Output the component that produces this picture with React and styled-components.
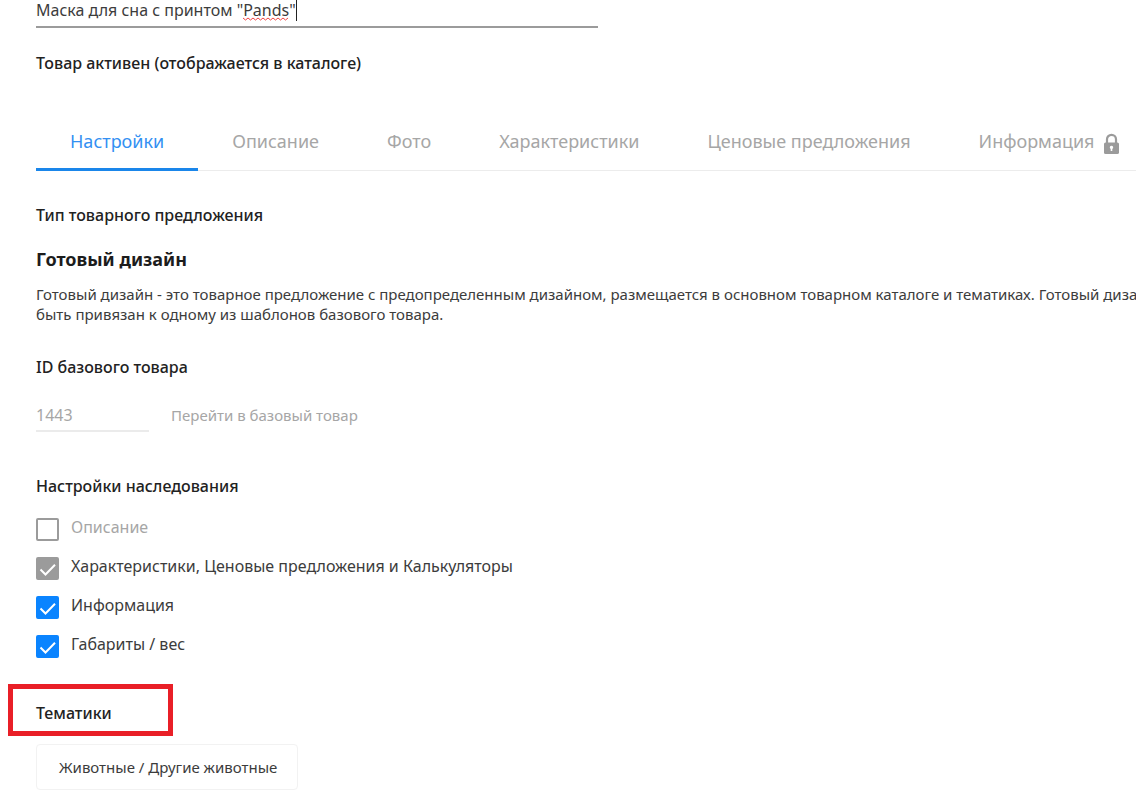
import React, { useState } from "react";
import styled, { createGlobalStyle } from "styled-components";

const GlobalStyle = createGlobalStyle`
  *, *::before, *::after { box-sizing: border-box; }
  body {
    margin: 0;
    background: #fff;
    color: #3c3c3c;
    font-family: "Noto Sans", "Open Sans", sans-serif;
    font-size: 16px;
    line-height: 24px;
  }
  h2, h3, p { margin: 0; }
  button, input { font: inherit; color: inherit; }
`;

const Page = styled.main`
  overflow: hidden;
  padding: 0 0 22px 36px;
`;

const NameField = styled.div`
  position: relative;
  max-width: 562px;
`;

const TextInput = styled.input`
  display: block;
  width: 100%;
  height: 28px;
  padding: 0 0 6px;
  border: 0;
  border-bottom: 2px solid #9b9b9b;
  border-radius: 0;
  outline: 0;
  background: none;
`;

const Squiggle = styled.svg`
  position: absolute;
  left: 207px;
  top: 17px;
`;

const Caret = styled.span`
  position: absolute;
  left: 260px;
  top: 0;
  width: 1px;
  height: 21px;
  background: #222;
`;

const Label = styled.h3`
  position: relative;
  color: #222;
  font-size: 16px;
  font-weight: 500;
  line-height: 24px;
`;

const Status = styled(Label)`
  margin: 23px 0 38px;
`;

const TabBar = styled.div`
  display: flex;
  width: max-content;
  min-width: 100%;
  border-bottom: 1px solid #ececec;
`;

const Tab = styled.button`
  display: flex;
  align-items: center;
  gap: 8px;
  height: 58px;
  margin-bottom: -1px;
  padding: 0 34px;
  border: 0;
  border-bottom: 3px solid ${(p) => (p.$active ? "#1a86ea" : "transparent")};
  background: none;
  color: ${(p) => (p.$active ? "#3390f2" : "#a6a6a6")};
  font-size: 18px;
  line-height: 24px;
  white-space: nowrap;
  cursor: pointer;
`;

const Section = styled.section`
  margin-top: ${(p) => p.$top}px;
`;

const Title = styled.h2`
  margin-top: 20px;
  color: #1c1c1c;
  font-size: 18px;
  font-weight: 700;
  line-height: 24px;
`;

const Description = styled.p`
  min-width: 1190px;
  margin-top: 13px;
  font-size: 15px;
  line-height: 20px;
`;

const BaseRow = styled.div`
  display: flex;
  gap: 22px;
  margin-top: 24px;
  color: #a6a6a6;
`;

const IdInput = styled(TextInput)`
  width: 113px;
  height: 29px;
  padding-bottom: 4px;
  border-color: #ebebeb;
`;

const BaseLink = styled.a`
  color: inherit;
  font-size: 15px;
  line-height: 24px;
  text-decoration: none;
`;

const Options = styled.div`
  display: flex;
  flex-direction: column;
  align-items: flex-start;
  gap: 16px;
  margin-top: 20px;
`;

const Option = styled.label`
  display: flex;
  gap: 12px;
  height: 23px;
  color: ${(p) => (p.$muted ? "#a6a6a6" : "inherit")};
  line-height: 18px;
`;

const CheckWrap = styled.span`
  display: grid;
  width: 23px;
  height: 23px;

  > * { grid-area: 1 / 1; }
  > svg { pointer-events: none; }
`;

const Check = styled.input`
  appearance: none;
  width: 23px;
  height: 23px;
  margin: 0;
  border: 2px solid #9b9b9b;
  border-radius: 2px;
  background: #fff;

  &:checked {
    border-color: #0a84ff;
    background: #0a84ff;
  }

  &:checked:disabled {
    border-color: #9b9b9b;
    background: #9b9b9b;
  }
`;

const Highlight = styled.span`
  position: absolute;
  left: -28px;
  top: -17px;
  width: 165px;
  height: 52px;
  border: 5px solid #e91f27;
  pointer-events: none;
`;

const Topic = styled.button`
  height: 46px;
  margin-top: 19px;
  padding: 0 20px 0 22px;
  border: 1px solid #f2f2f2;
  border-radius: 4px;
  background: #fff;
  font-size: 15px;
  line-height: 24px;
`;

const LockIcon = () => (
  <svg width="17" height="26" viewBox="0 -5 17 26" aria-hidden="true">
    <path d="M4 11V6.3a4.5 4.5 0 0 1 9 0V11" fill="none" stroke="#9b9b9b" strokeWidth="2.2" />
    <rect x="1" y="9.5" width="15" height="11.5" rx="1.6" fill="#9b9b9b" />
    <path d="M8.5 12.8a1.7 1.7 0 0 1 .8 3.2v2H7.7v-2a1.7 1.7 0 0 1 .8-3.2z" fill="#fff" />
  </svg>
);

const TABS = ["Настройки", "Описание", "Фото", "Характеристики", "Ценовые предложения", "Информация"];

const OPTIONS = [
  { label: "Описание", checked: false, disabled: true, muted: true },
  { label: "Характеристики, Ценовые предложения и Калькуляторы", checked: true, disabled: true },
  { label: "Информация", checked: true },
  { label: "Габариты / вес", checked: true },
];

function CheckOption({ label, checked, disabled, muted }) {
  const [on, setOn] = useState(checked);
  return (
    <Option $muted={muted}>
      <CheckWrap>
        <Check type="checkbox" checked={on} disabled={disabled} onChange={() => setOn(!on)} />
        {on && (
          <svg width="23" height="23" viewBox="0 0 23 23" aria-hidden="true">
            <path d="M4.5 12.5l5 5L19 7.8" fill="none" stroke="#fff" strokeWidth="2" />
          </svg>
        )}
      </CheckWrap>
      {label}
    </Option>
  );
}

export default function App() {
  const [tab, setTab] = useState(TABS[0]);
  return (
    <>
      <GlobalStyle />
      <Page>
        <NameField>
          <TextInput aria-label="Название товара" defaultValue={'Маска для сна с принтом "Pands"'} spellCheck={false} />
          <Squiggle width="46" height="4" viewBox="0 0 46 4" aria-hidden="true">
            <path
              d="M0 1l2.5 2L5 1l2.5 2L10 1l2.5 2L15 1l2.5 2L20 1l2.5 2L25 1l2.5 2L30 1l2.5 2L35 1l2.5 2L40 1l2.5 2L45 1"
              fill="none"
              stroke="#f04444"
            />
          </Squiggle>
          <Caret />
        </NameField>
        <Status>Товар активен (отображается в каталоге)</Status>

        <TabBar role="tablist">
          {TABS.map((name) => (
            <Tab key={name} type="button" role="tab" aria-selected={name === tab} $active={name === tab} onClick={() => setTab(name)}>
              {name}
              {name === "Информация" && <LockIcon />}
            </Tab>
          ))}
        </TabBar>

        <Section $top={32}>
          <Label>Тип товарного предложения</Label>
          <Title>Готовый дизайн</Title>
          <Description>
            Готовый дизайн - это товарное предложение с предопределенным дизайном, размещается в основном товарном каталоге и
            тематиках. Готовый дизайн может быть привязан к одному из шаблонов базового товара.
          </Description>
        </Section>

        <Section $top={31}>
          <Label as="label" htmlFor="base-id">ID базового товара</Label>
          <BaseRow>
            <IdInput id="base-id" defaultValue="1443" disabled />
            <BaseLink href="#base">Перейти в базовый товар</BaseLink>
          </BaseRow>
        </Section>

        <Section $top={42}>
          <Label>Настройки наследования</Label>
          <Options>
            {OPTIONS.map((o) => (
              <CheckOption key={o.label} {...o} />
            ))}
          </Options>
        </Section>

        <Section $top={43}>
          <Label>
            Тематики
            <Highlight />
          </Label>
          <Topic type="button">Животные / Другие животные</Topic>
        </Section>
      </Page>
    </>
  );
}
